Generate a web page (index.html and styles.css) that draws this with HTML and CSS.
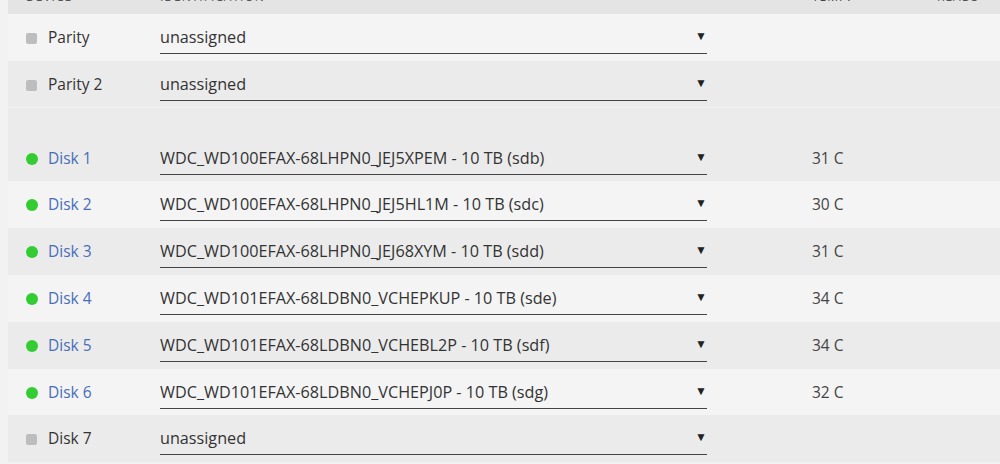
FILE: index.html
```html
<!DOCTYPE html>
<html lang="en">
<head>
<meta charset="UTF-8">
<title>Array Devices</title>
<link rel="stylesheet" href="styles.css">
</head>
<body>
<div class="page">
  <table class="disk_status">
    <thead>
      <tr>
        <td class="col-dev">Device</td>
        <td class="col-id">Identification</td>
        <td class="col-temp">Temp.</td>
        <td class="col-reads">Reads</td>
      </tr>
    </thead>
    <tbody>
      <tr class="light">
        <td class="col-dev"><span class="icon off"></span>Parity</td>
        <td class="col-id"><div class="select"><span>unassigned</span><span class="arrow">&#9660;</span></div></td>
        <td></td><td></td>
      </tr>
      <tr class="dark">
        <td class="col-dev"><span class="icon off"></span>Parity 2</td>
        <td class="col-id"><div class="select"><span>unassigned</span><span class="arrow">&#9660;</span></div></td>
        <td></td><td></td>
      </tr>
      <tr class="spacer"><td colspan="4"></td></tr>
      <tr class="dark">
        <td class="col-dev"><span class="icon on"></span><a href="#">Disk 1</a></td>
        <td class="col-id"><div class="select"><span>WDC_WD100EFAX-68LHPN0_JEJ5XPEM - 10 TB (sdb)</span><span class="arrow">&#9660;</span></div></td>
        <td class="col-temp">31 C</td><td></td>
      </tr>
      <tr class="light">
        <td class="col-dev"><span class="icon on"></span><a href="#">Disk 2</a></td>
        <td class="col-id"><div class="select"><span>WDC_WD100EFAX-68LHPN0_JEJ5HL1M - 10 TB (sdc)</span><span class="arrow">&#9660;</span></div></td>
        <td class="col-temp">30 C</td><td></td>
      </tr>
      <tr class="dark">
        <td class="col-dev"><span class="icon on"></span><a href="#">Disk 3</a></td>
        <td class="col-id"><div class="select"><span>WDC_WD100EFAX-68LHPN0_JEJ68XYM - 10 TB (sdd)</span><span class="arrow">&#9660;</span></div></td>
        <td class="col-temp">31 C</td><td></td>
      </tr>
      <tr class="light">
        <td class="col-dev"><span class="icon on"></span><a href="#">Disk 4</a></td>
        <td class="col-id"><div class="select"><span>WDC_WD101EFAX-68LDBN0_VCHEPKUP - 10 TB (sde)</span><span class="arrow">&#9660;</span></div></td>
        <td class="col-temp">34 C</td><td></td>
      </tr>
      <tr class="dark">
        <td class="col-dev"><span class="icon on"></span><a href="#">Disk 5</a></td>
        <td class="col-id"><div class="select"><span>WDC_WD101EFAX-68LDBN0_VCHEBL2P - 10 TB (sdf)</span><span class="arrow">&#9660;</span></div></td>
        <td class="col-temp">34 C</td><td></td>
      </tr>
      <tr class="light">
        <td class="col-dev"><span class="icon on"></span><a href="#">Disk 6</a></td>
        <td class="col-id"><div class="select"><span>WDC_WD101EFAX-68LDBN0_VCHEPJ0P - 10 TB (sdg)</span><span class="arrow">&#9660;</span></div></td>
        <td class="col-temp">32 C</td><td></td>
      </tr>
      <tr class="dark">
        <td class="col-dev"><span class="icon off"></span>Disk 7</td>
        <td class="col-id"><div class="select"><span>unassigned</span><span class="arrow">&#9660;</span></div></td>
        <td></td><td></td>
      </tr>
    </tbody>
  </table>
</div>
</body>
</html>
```

FILE: styles.css
```css
html, body {
    margin: 0;
    padding: 0;
    background: #f2f2f2;
    overflow: hidden;
}
.page {
    padding-left: 8px;
    font-family: "Open Sans", "Liberation Sans", sans-serif;
    font-size: 15.5px;
    color: #333;
}
table.disk_status {
    width: 992px;
    border-collapse: collapse;
    table-layout: fixed;
    margin-top: -22px;
}
table.disk_status td {
    padding: 0;
    white-space: nowrap;
}
thead tr {
    height: 36px;
    background: #e4e4e4;
}
thead td {
    font-size: 12px;
    letter-spacing: 1px;
    text-transform: uppercase;
    color: #555;
}
tbody tr {
    height: 46.8px;
}
tbody td {
    vertical-align: top;
    line-height: 20px;
    padding-top: 13px !important;
}
tr.light { background: #f4f4f4; }
tr.dark { background: #ebebeb; }
tr.spacer {
    height: 27px;
    background: #ebebeb;
    border-top: 1px solid #f2f2f2;
}
tr.spacer td { padding-top: 0 !important; }
.col-dev {
    width: 152px;
    padding-left: 18px !important;
    box-sizing: border-box;
}
.col-id { width: 652px; }
.col-temp { width: 125px; color: #444; }
.icon {
    display: inline-block;
    width: 11px;
    height: 11px;
    margin-right: 11px;
    vertical-align: -1px;
}
.icon.off {
    background: #bdbdbd;
    border-radius: 2px;
}
.icon.on {
    background: #33cc33;
    border-radius: 50%;
    width: 12px;
    height: 12px;
    margin-right: 10px;
}
a {
    color: #486dba;
    text-decoration: none;
}
.select {
    width: 547px;
    display: flex;
    justify-content: space-between;
    align-items: flex-start;
    height: 27px;
    border-bottom: 1px solid #444;
    box-sizing: border-box;
    font-size: 16.2px;
}
.arrow {
    font-size: 12px;
    line-height: 18px;
    color: #222;
}
```
